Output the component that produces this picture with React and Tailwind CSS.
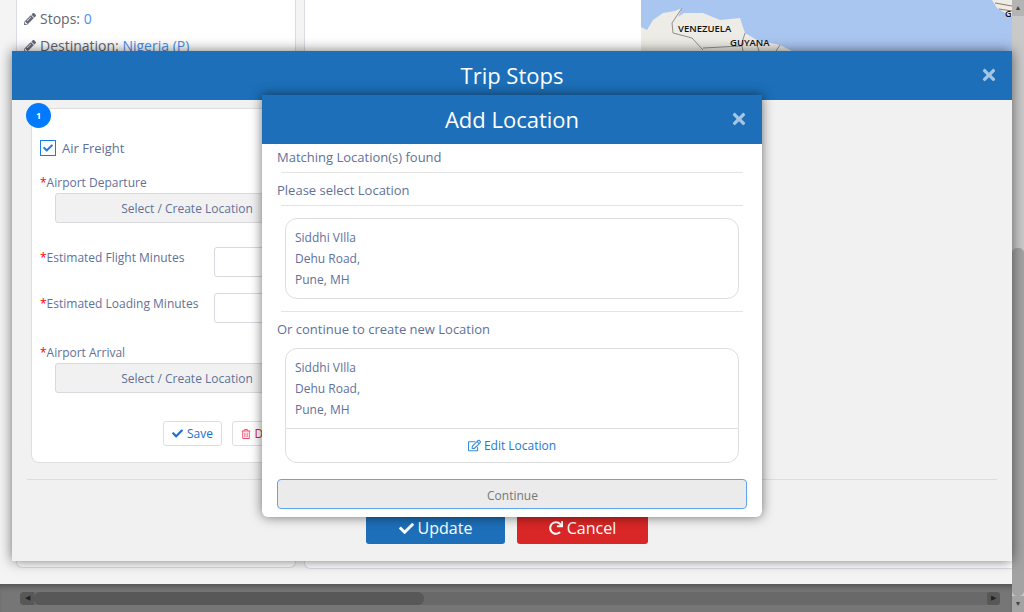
import React from "react";
import { FaCheck, FaPencilAlt, FaRedo, FaRegEdit, FaRegTrashAlt, FaTimes } from "react-icons/fa";

const MapPiece = () => (
  <svg viewBox="0 0 371 51" className="h-[51px] w-[371px]">
    <rect width="371" height="51" fill="#a9c6f0" />
    <path
      d="M0 27 L6 30 L12 20 L22 13 L34 11 L41 8 L37 17 L43 13 L62 13 L79 20 L99 18 L104 33 L116 40 L139 45 L151 51 L0 51 Z"
      fill="#eeece6"
    />
    <path d="M41 8 L31 23 L32 33 L51 38 L62 50 M62 48 L100 46 L104 33 M101 46 L102 51 M116 45 L118 51 M139 45 L135 51" fill="none" stroke="#8f8f8f" strokeWidth="1" />
    <path d="M351 0 L371 0 L371 17 L356 8 Z" fill="#eeece6" />
    <path d="M354 3 L371 6 M358 9 L371 11" fill="none" stroke="#8c7a5c" strokeWidth="1" />
    <text x="37" y="32" fontSize="9.5" fontFamily="Open Sans, sans-serif" fontWeight="600" fill="#111">VENEZUELA</text>
    <text x="89" y="46" fontSize="9.5" fontFamily="Open Sans, sans-serif" fontWeight="600" fill="#111">GUYANA</text>
    <text x="364" y="17" fontSize="9" fontFamily="Open Sans, sans-serif" fontWeight="600" fill="#111">G</text>
  </svg>
);

const Label = ({ children, className = "" }) => (
  <div className={`text-[12px] leading-[16px] text-[#5f7199] ${className}`}>
    <span className="text-[#f00]">*</span>
    {children}
  </div>
);

const SelectButton = () => (
  <div className="ml-[15px] mt-[2px] flex h-[30px] w-[264px] items-center justify-center rounded-[3px] border border-[#d8d8de] bg-[#f1f1f1] pt-[2px] text-[12px] text-[#5f7199]">
    Select / Create Location
  </div>
);

const Address = () => (
  <div className="px-[9px] py-[8px] text-[12px] leading-[21px] text-[#5f7199]">
    <div>Siddhi VIlla</div>
    <div>Dehu Road,</div>
    <div>Pune, MH</div>
  </div>
);

const App = () => {
  return (
    <div className="relative flex h-[612px] w-[1024px] overflow-hidden bg-[#f4f4f4] font-['Open_Sans',sans-serif]">
      {/* page behind the dialogs */}
      <div className="flex w-[1012px] flex-col">
        <div className="flex h-[584px] items-start">
          <div className="ml-[16px] h-[568px] w-[280px] rounded-b-[6px] border border-t-0 border-[#dcdbe8] bg-white pl-[7px] pt-[5px] text-[14px] leading-[27px] text-[#5f6672]">
            <div className="flex items-center gap-[4px]">
              <FaPencilAlt className="text-[12px] text-[#666a78]" />
              <span>
                Stops: <span className="text-[#4a90f0]">0</span>
              </span>
            </div>
            <div className="flex items-center gap-[4px]">
              <FaPencilAlt className="text-[12px] text-[#666a78]" />
              <span>
                Destination: <span className="text-[#4a90f0]">Nigeria (P)</span>
              </span>
            </div>
          </div>
          <div className="ml-[8px] flex h-[569px] w-[708px] justify-end rounded-bl-[6px] border border-t-0 border-r-0 border-[#dcdbe8] bg-white">
            <MapPiece />
          </div>
        </div>
        <div className="flex h-[28px] items-center bg-[#767676] pl-[20px] pr-[12px] shadow-[inset_0_6px_6px_-4px_rgba(0,0,0,0.35)]">
          <div className="flex h-[13px] w-full items-center rounded-[4px] bg-[#696969]">
            <div className="flex h-[13px] w-[14px] items-center justify-center rounded-l-[4px] bg-[#585858] text-[7px] text-[#222]">◀</div>
            <div className="h-[13px] w-[390px] rounded-[6px] bg-[#585858]" />
            <div className="ml-auto flex h-[13px] w-[13px] items-center justify-center rounded-[3px] bg-[#585858] text-[7px] text-[#222]">▶</div>
          </div>
        </div>
      </div>

      {/* page scrollbar */}
      <div className="flex w-[12px] flex-col bg-[#c9c9c9]">
        <div className="flex h-[16px] items-center justify-center bg-[#b4b4b4] text-[7px] text-[#444]">▲</div>
        <div className="mt-[232px] h-[348px] rounded-[5px] bg-[#a3a3a3]" />
        <div className="flex h-[16px] items-center justify-center bg-[#a3a3a3] text-[7px] text-[#444]">▼</div>
      </div>

      {/* Trip Stops dialog */}
      <div className="absolute left-[12px] top-[51px] h-[510px] w-[1000px] bg-[#f1f1f1] shadow-[0_0_12px_rgba(0,0,0,0.55)]">
        <div className="relative flex h-[49px] items-center justify-center bg-[#1c6fb8] text-[22px] text-white">
          Trip Stops
          <FaTimes className="absolute right-[14px] top-[15px] text-[18px] text-[#a4c5e3]" />
        </div>

        <div className="relative ml-[19px] mt-[8px] h-[355px] w-[340px] rounded-[8px] border border-[#dedede] bg-white pl-[8px]">
          <div className="absolute left-[-6px] top-[-6px] flex h-[25px] w-[25px] items-center justify-center rounded-full bg-[#007bff] text-[9px] font-bold text-white">
            1
          </div>
          <div className="flex items-center gap-[6px] pt-[31px] text-[13px] leading-[16px] text-[#5f7199]">
            <div className="flex h-[16px] w-[16px] items-center justify-center border border-[#1a7be0] text-[10px] text-[#1a7be0]">
              <FaCheck />
            </div>
            Air Freight
          </div>
          <Label className="mt-[19px]">Airport Departure</Label>
          <SelectButton />
          <div className="mt-[24px] flex h-[30px] items-start">
            <Label className="mt-[3px] w-[174px]">Estimated Flight Minutes</Label>
            <div className="h-[30px] w-[90px] rounded-[3px] border border-[#d8d8de] bg-white" />
          </div>
          <div className="mt-[16px] flex h-[30px] items-start">
            <Label className="mt-[3px] w-[174px]">Estimated Loading Minutes</Label>
            <div className="h-[30px] w-[90px] rounded-[3px] border border-[#d8d8de] bg-white" />
          </div>
          <Label className="mt-[22px]">Airport Arrival</Label>
          <SelectButton />
          <div className="ml-[123px] mt-[28px] flex gap-[10px] text-[12px]">
            <div className="flex h-[25px] w-[59px] items-center justify-center gap-[4px] rounded-[3px] border border-[#dedede] text-[#1a6fd0]">
              <FaCheck className="text-[11px]" />
              Save
            </div>
            <div className="flex h-[25px] w-[68px] items-center justify-center gap-[3px] rounded-[3px] border border-[#dedede] text-[#d9261c]">
              <FaRegTrashAlt className="text-[10px] text-[#f0506e]" />
              Delete
            </div>
          </div>
        </div>

        <div className="ml-[15px] mt-[16px] h-px w-[970px] bg-[#dcdcdc]" />

        <div className="ml-[354px] mt-[32px] flex gap-[12px] text-[16px] text-white">
          <div className="flex h-[32px] w-[139px] items-center justify-center gap-[4px] rounded-[3px] bg-[#1c6fb8]">
            <FaCheck className="text-[15px]" />
            Update
          </div>
          <div className="flex h-[32px] w-[131px] items-center justify-center gap-[4px] rounded-[3px] bg-[#d92626]">
            <FaRedo className="text-[14px]" />
            Cancel
          </div>
        </div>
      </div>

      {/* Add Location dialog */}
      <div className="absolute left-[262px] top-[95px] h-[422px] w-[500px] rounded-b-[6px] bg-white shadow-[0_0_12px_rgba(0,0,0,0.55)]">
        <div className="relative flex h-[49px] items-center justify-center bg-[#1c6fb8] text-[22px] text-white">
          Add Location
          <FaTimes className="absolute right-[14px] top-[15px] text-[18px] text-[#a4c5e3]" />
        </div>
        <div className="pl-[15px] pr-[15px] text-[13px] text-[#5f7199]">
          <div className="flex h-[28px] items-center">Matching Location(s) found</div>
          <div className="ml-[4px] h-px w-[462px] bg-[#e4e4e4]" />
          <div className="flex h-[32px] items-center pt-[3px]">Please select Location</div>
          <div className="ml-[4px] h-px w-[462px] bg-[#e4e4e4]" />
          <div className="ml-[8px] mt-[12px] h-[81px] w-[454px] rounded-[12px] border border-[#dedede]">
            <Address />
          </div>
          <div className="ml-[4px] mt-[12px] h-px w-[462px] bg-[#e4e4e4]" />
          <div className="flex h-[36px] items-center">Or continue to create new Location</div>
          <div className="ml-[8px] h-[115px] w-[454px] rounded-[12px] border border-[#dedede]">
            <div className="h-[79px]">
              <Address />
            </div>
            <div className="flex h-[34px] items-center justify-center gap-[3px] border-t border-[#dedede] text-[12px] text-[#1a7bd0]">
              <FaRegEdit className="text-[13px] text-[#3a8bd8]" />
              Edit Location
            </div>
          </div>
          <div className="mt-[16px] flex h-[30px] w-[470px] items-center justify-center rounded-[4px] border border-[#5ea5ee] bg-[#ebebeb] pt-[3px] text-[12px] text-[#777]">
            <span className="pl-[1px]">Continue</span>
          </div>
        </div>
      </div>
    </div>
  );
};

export default App;
